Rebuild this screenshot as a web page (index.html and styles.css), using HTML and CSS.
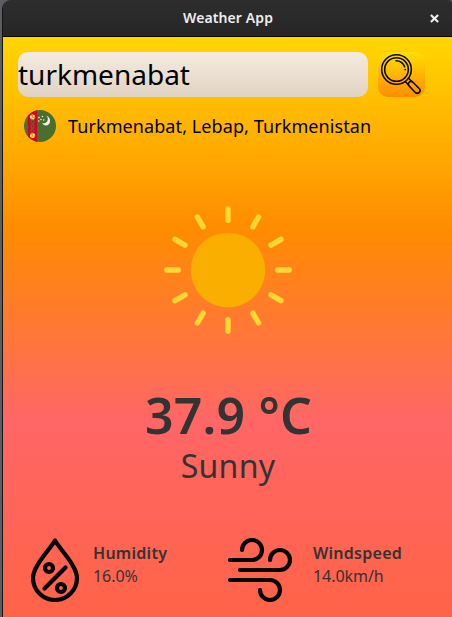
FILE: index.html
```
<!DOCTYPE html>
<html lang="en">
<head>
<meta charset="utf-8">
<title>Weather App</title>
<link rel="stylesheet" href="styles.css">
</head>
<body>
<div class="window">
  <header class="titlebar">
    <h1 class="title">Weather App</h1>
    <svg class="close" viewBox="0 0 8 8"><path d="M.8.8l6.400 6.400M7.200.8L.8 7.200"/></svg>
  </header>
  <main class="content">
    <div class="search">
      <div class="field">turkmenabat</div>
      <div class="button">
        <svg viewBox="0 0 47 45" fill="none" stroke="#0c0800" stroke-width="1.600" stroke-linecap="round">
          <circle cx="18.5" cy="17.5" r="14.8"/>
          <circle cx="18.5" cy="17.5" r="11.8"/>
          <path d="M18 8.700c4.200 0 7.200 2.600 8.600 6M27.200 17.500v.2"/>
          <path d="M27.700 30l3 3M31 26.800l3 3"/>
          <path d="M34.200 29.500l7.200 7.200c2.200 2.400-1.300 6-3.900 4l-7-7.300c-.8-2.500 1.200-4.600 3.700-3.900z"/>
        </svg>
      </div>
    </div>
    <div class="place">
      <svg class="flag" viewBox="0 0 32 32">
        <clipPath id="round"><circle cx="16" cy="16" r="16"/></clipPath>
        <g clip-path="url(#round)">
          <path fill="#496e2d" d="M0 0h32v32H0z"/>
          <path fill="#d80027" d="M4 0h9v32H4z"/>
          <g fill="#ff9811"><circle cx="8.500" cy="7" r="2.700"/><circle cx="8.500" cy="25.500" r="2.700"/></g>
          <g fill="#fff" opacity=".75"><path d="M6 6h2v2H6zM9 5h1.500v2H9zM8 8h2v1.500H8zM6 25h2v1.500H6zM9 24h1.500v1.500H9zM8 26.500h2V28H8z"/></g>
          <g fill="#d80027" stroke="#496e2d" stroke-width="1.300"><circle cx="8.500" cy="11.800" r="1.600"/><circle cx="8.500" cy="16.200" r="1.600"/><circle cx="8.500" cy="20.600" r="1.600"/></g>
          <path fill="#f0f0f0" d="M21.500 5.400c3 .8 3.200 5.600.3 7.300-1.200.7-2.700.8-3.700.3 1.200 2.600 4.700 3.300 6.700 1.200 2.700-2.700 1-8.200-3.300-8.800z"/>
          <g fill="#f0f0f0"><circle cx="15" cy="7.500" r=".8"/><circle cx="18.500" cy="6.500" r=".8"/><circle cx="17" cy="9.500" r=".8"/><circle cx="14.800" cy="11" r=".8"/><circle cx="19.700" cy="10" r=".8"/></g>
        </g>
      </svg>
      <span class="place-name">Turkmenabat, Lebap, Turkmenistan</span>
    </div>
    <svg class="sun" viewBox="-64 -64 128 128">
      <circle r="37.300" fill="#faaf00"/>
      <g stroke="#fdd835" stroke-width="5.400" stroke-linecap="round">
        <path id="ray" d="M0-61.200v11.500"/>
        <use href="#ray" transform="rotate(30)"/><use href="#ray" transform="rotate(60)"/>
        <use href="#ray" transform="rotate(90)"/><use href="#ray" transform="rotate(120)"/>
        <use href="#ray" transform="rotate(150)"/><use href="#ray" transform="rotate(180)"/>
        <use href="#ray" transform="rotate(210)"/><use href="#ray" transform="rotate(240)"/>
        <use href="#ray" transform="rotate(270)"/><use href="#ray" transform="rotate(300)"/>
        <use href="#ray" transform="rotate(330)"/>
      </g>
    </svg>
    <div class="temperature">37.9 °C</div>
    <div class="condition">Sunny</div>
    <div class="details">
      <div class="detail humidity">
        <svg class="icon" viewBox="0 0 64 64">
          <path d="M24 2.500C18.500 12 2 28 2 40a22 22 0 0 0 44 0C46 28 29.500 12 24 2.500z"/>
          <circle cx="18" cy="30" r="4"/><circle cx="30" cy="50" r="4"/>
          <path d="M34.500 29.500l-21 21"/>
        </svg>
        <div><div class="label">Humidity</div><div class="value">16.0%</div></div>
      </div>
      <div class="detail">
        <svg class="icon" viewBox="0 0 64 64">
          <path d="M2 22h22a10 10 0 1 0-10-10"/>
          <path d="M12 32h40a10 10 0 1 0-10-10"/>
          <path d="M2 42h40a10 10 0 1 1-10 10"/>
        </svg>
        <div><div class="label">Windspeed</div><div class="value">14.0km/h</div></div>
      </div>
    </div>
  </main>
</div>
</body>
</html>
```
FILE: styles.css
```
* { box-sizing: border-box; }
body {
  margin: 0;
  height: 617px;
  overflow: hidden;
  background: #5b5d60;
  font-family: "Noto Sans", sans-serif;
  color: #333;
}
.window {
  margin-left: 2px;
  width: 450px;
  height: 617px;
  border-left: 1px solid #151515;
  border-radius: 9px 4px 0 0;
  overflow: hidden;
  display: flex;
  flex-direction: column;
}
.titlebar {
  height: 37px;
  flex: none;
  display: grid;
  grid-template-columns: 1fr auto 1fr;
  align-items: center;
  background: linear-gradient(#2d2d2d, #262626);
  border-bottom: 1px solid #080808;
}
.title {
  grid-column: 2;
  margin: -2px 0 0 1px;
  font-size: 14px;
  font-weight: 600;
  letter-spacing: 0.1px;
  color: #eee;
}
.close {
  width: 9px;
  height: 9px;
  justify-self: end;
  margin-right: 13px;
  fill: none;
  stroke: #eee;
  stroke-width: 1.900;
}
.content {
  flex: 1;
  display: flex;
  flex-direction: column;
  align-items: center;
  padding-top: 15px;
  background: linear-gradient(#ffd700, #ff8c00 33%, #ff6666 66%, #ff6347);
}
.search {
  align-self: stretch;
  display: flex;
  gap: 10px;
  padding-left: 15px;
}
.field {
  width: 350px;
  height: 45px;
  border-radius: 10px;
  background: linear-gradient(#f5ebe0, #e0d3c3);
  color: #000;
  font-size: 28px;
  line-height: 44px;
}
.button {
  width: 47px;
  height: 45px;
  border-radius: 10px;
  background: linear-gradient(#ffdf00, #ff8c00);
}
.button svg { display: block; width: 47px; height: 45px; }
.place {
  align-self: stretch;
  display: flex;
  align-items: center;
  gap: 12px;
  height: 32px;
  margin: 13px 0 0 21px;
  color: #000;
  font-size: 18px;
  letter-spacing: 0.09px;
  white-space: nowrap;
}
.flag { width: 32px; height: 32px; }
.sun { width: 128px; height: 128px; margin-top: 64px; }
.temperature {
  margin: 54px 0 0 2px;
  height: 54px;
  font-size: 50px;
  line-height: 54px;
  font-weight: 600;
  letter-spacing: 0.2px;
  white-space: nowrap;
}
.condition {
  margin: 2px 0 0 1px;
  height: 44px;
  font-size: 32px;
  line-height: 44px;
  letter-spacing: 0.25px;
}
.details {
  align-self: stretch;
  display: flex;
  margin-top: 50px;
  padding-left: 28px;
}
.detail { display: flex; width: 197px; }
.icon {
  width: 64px;
  height: 64px;
  flex: none;
  fill: none;
  stroke: #000;
  stroke-width: 4.200;
  stroke-linecap: round;
  stroke-linejoin: round;
}
.detail .icon { margin-right: 21px; }
.humidity .icon { margin-right: -2px; }
.label {
  margin-top: 4px;
  font-size: 16px;
  line-height: 22px;
  font-weight: 600;
  letter-spacing: 0.28px;
}
.value { margin-top: 2px; font-size: 16px; line-height: 20px; letter-spacing: -0.05px; }
```
